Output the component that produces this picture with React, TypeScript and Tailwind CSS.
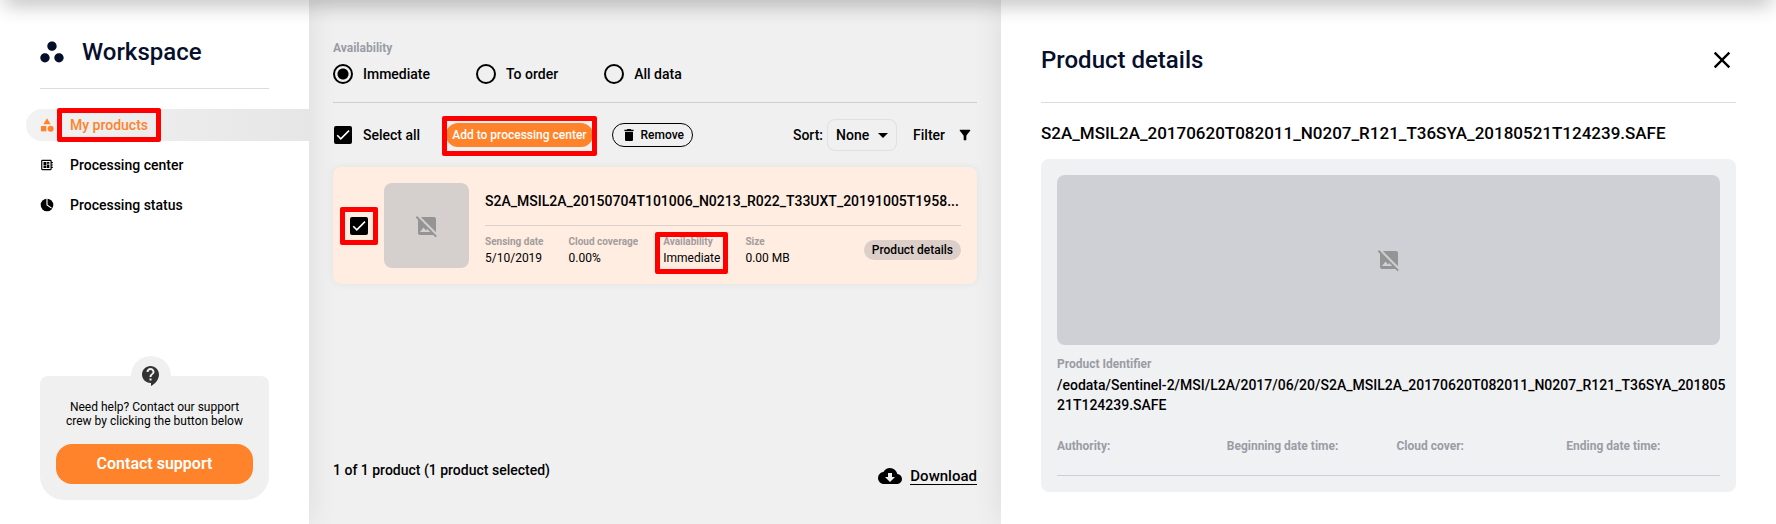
import React from "react";
import {
  MdArrowDropDown,
  MdCategory,
  MdClose,
  MdCloudDownload,
  MdContactSupport,
  MdDelete,
  MdDeveloperBoard,
  MdFilterAlt,
  MdImageNotSupported,
  MdWorkspaces,
} from "react-icons/md";

const ClockIcon = ({ className }: { className?: string }) => (
  <svg viewBox="0 0 16 16" className={className}>
    <circle cx="8" cy="8" r="7.2" fill="currentColor" />
    <path
      d="M8 0.5 V8 L13.2 11.6"
      fill="none"
      stroke="white"
      strokeWidth="1.3"
    />
  </svg>
);

const menu = [
  {
    label: "My products",
    icon: MdCategory,
    iconClass: "size-4",
    active: true,
  },
  {
    label: "Processing center",
    icon: MdDeveloperBoard,
    iconClass: "size-3.5",
    active: false,
  },
  {
    label: "Processing status",
    icon: ClockIcon,
    iconClass: "size-3.5",
    active: false,
  },
];

const availability = ["Immediate", "To order", "All data"];

const productInfo = [
  { label: "Sensing date", value: "5/10/2019" },
  { label: "Cloud coverage", value: "0.00%" },
  { label: "Availability", value: "Immediate", marked: true },
  { label: "Size", value: "0.00 MB" },
];

const detailFields = [
  "Authority:",
  "Beginning date time:",
  "Cloud cover:",
  "Ending date time:",
];

// red frame around a tutorial step, sits over the marked element
const Mark = ({ className }: { className: string }) => (
  <span
    className={`pointer-events-none absolute z-20 rounded-xs border-5 border-[#ff0000] ${className}`}
  />
);

const CheckBox = ({ id, label }: { id: string; label?: string }) => (
  <span className="relative block size-[18px] shrink-0">
    <input
      id={id}
      type="checkbox"
      defaultChecked
      aria-label={label}
      className="peer block size-[18px] appearance-none rounded-xs border-2 border-black checked:bg-black"
    />
    <svg
      viewBox="0 0 18 18"
      className="pointer-events-none absolute inset-0 hidden peer-checked:block"
      fill="none"
      stroke="white"
      strokeWidth="1.6"
    >
      <path d="M3.2 9.2 L6.8 12.8 L15 4.6" />
    </svg>
  </span>
);

const Sidebar = () => (
  <aside className="relative z-10 flex flex-col bg-white pl-10 shadow-[0_0_30px_rgba(0,0,0,0.09)]">
    <div className="mr-10 flex h-[89px] items-center gap-4 border-b border-[#dcdcdc] pt-4 text-[#050f2c]">
      <MdWorkspaces className="-ml-0.5 size-7" />
      <h1 className="text-2xl font-medium">Workspace</h1>
    </div>
    <nav className="mt-5 -ml-3.5 flex flex-col gap-2">
      {menu.map(({ label, icon: Icon, iconClass, active }) => (
        <a
          key={label}
          href="#"
          className={`flex h-8 items-center gap-[15px] rounded-l-full pl-[13px] text-sm font-medium ${
            active
              ? "bg-linear-to-r from-[#f2f2f2] to-[#e6e6e6] text-[#ff832b]"
              : "text-black"
          }`}
        >
          <span className="flex w-4 justify-center">
            <Icon className={iconClass} />
          </span>
          <span className="relative">
            {label}
            {active && <Mark className="-inset-x-[13px] -inset-y-[7px]" />}
          </span>
        </a>
      ))}
    </nav>
    <div className="relative mt-auto mr-10 mb-6 rounded-t-lg rounded-b-3xl bg-[#f0f0f0] px-4 pt-6 pb-4">
      <div className="absolute -top-5 left-1/2 -ml-6 flex size-10 items-center justify-center rounded-full bg-[#f0f0f0]">
        <MdContactSupport className="size-6 text-[#333333]" />
      </div>
      <p className="text-center text-xs leading-[14px]">
        Need help? Contact our support
        <br />
        crew by clicking the button below
      </p>
      <button className="mt-4 h-10 w-full rounded-2xl bg-[#ff832b] text-base font-semibold text-white">
        Contact support
      </button>
    </div>
  </aside>
);

const Thumb = ({ className }: { className: string }) => (
  <div className={`flex items-center justify-center rounded-lg ${className}`}>
    <MdImageNotSupported className="size-6 text-[#949494]" />
  </div>
);

const ProductCard = () => (
  <article className="flex items-center rounded-lg bg-[#ffede1] py-4 pr-4 pl-[17px] shadow-[0_0_8px_rgba(0,0,0,0.06)]">
    <div className="relative mr-4">
      <CheckBox id="product" label="Select product" />
      <Mark className="-inset-2.5" />
    </div>
    <Thumb className="size-[85px] shrink-0 bg-[#d5cfce]" />
    <div className="mt-2 ml-4 min-w-0 flex-1 self-start">
      <h2 className="border-b border-[#dccfc8] pb-3.5 text-sm font-medium break-all">
        S2A_MSIL2A_20150704T101006_N0213_R022_T33UXT_20191005T1958...
      </h2>
      <div className="mt-2 flex items-center">
        <dl className="flex flex-1 gap-[25px]">
          {productInfo.map((item) => (
            <div key={item.label} className="relative">
              <dt className="text-[10px] leading-4 font-bold text-[#a39c9c]">
                {item.label}
              </dt>
              <dd className="text-xs leading-4">{item.value}</dd>
              {item.marked && <Mark className="-inset-x-2 -top-0.5 -bottom-2" />}
            </div>
          ))}
        </dl>
        <button className="h-5 rounded-full bg-[#dccfca] px-2 text-xs font-medium">
          Product details
        </button>
      </div>
    </div>
  </article>
);

const Products = () => (
  <main className="flex min-w-0 flex-col bg-[#f0f0f0] px-6 pt-10">
    <fieldset className="border-b border-[#cfcfcf] pb-[18px]">
      <legend className="text-xs leading-4 font-bold text-[#9a9ca5]">
        Availability
      </legend>
      <div className="mt-2 flex gap-[46px]">
        {availability.map((name, i) => (
          <label
            key={name}
            className="flex items-center gap-2.5 text-sm font-medium"
          >
            <input
              type="radio"
              name="availability"
              defaultChecked={i === 0}
              className="size-5 appearance-none rounded-full border-2 border-black checked:bg-[radial-gradient(circle,black_5px,transparent_6px)]"
            />
            {name}
          </label>
        ))}
      </div>
    </fieldset>
    <div className="flex h-16 items-center text-sm font-medium">
      <div className="ml-px flex items-center gap-[11px]">
        <CheckBox id="select-all" />
        <label htmlFor="select-all">Select all</label>
      </div>
      <div className="relative ml-[26px]">
        <button className="block h-6 rounded-full bg-[#ff832b] px-1.5 text-xs font-medium text-white">
          Add to processing center
        </button>
        <Mark className="-inset-x-1 -top-[7px] -bottom-[9px]" />
      </div>
      <button className="ml-[19px] flex h-6 items-center gap-1 rounded-full border border-black px-2 text-xs font-medium">
        <MdDelete className="size-4" />
        Remove
      </button>
      <label htmlFor="sort" className="ml-auto">
        Sort:
      </label>
      <div className="relative ml-1">
        <select
          id="sort"
          className="h-8 w-[70px] appearance-none rounded-lg border border-[#e0e0e0] pl-2"
        >
          <option>None</option>
        </select>
        <MdArrowDropDown className="pointer-events-none absolute top-1 right-0.5 size-6" />
      </div>
      <button className="ml-4 flex items-center gap-3 pr-1">
        Filter
        <MdFilterAlt className="size-4" />
      </button>
    </div>
    <ProductCard />
    <div className="mt-auto mb-9 flex justify-between text-sm font-medium">
      <p className="leading-6">1 of 1 product (1 product selected)</p>
      <a href="#" className="mt-1.5 flex items-center gap-2 text-[15px]">
        <MdCloudDownload className="size-6" />
        <span className="border-b border-black leading-4">Download</span>
      </a>
    </div>
  </main>
);

const Details = () => (
  <section className="relative z-10 min-w-0 bg-white px-10 pb-8 shadow-[0_0_30px_rgba(0,0,0,0.09)]">
    <div className="flex h-[103px] items-center justify-between border-b border-[#dcdcdc] pt-[18px]">
      <h1 className="text-2xl font-medium text-[#050f2c]">Product details</h1>
      <button aria-label="Close">
        <MdClose className="size-7" />
      </button>
    </div>
    <h2 className="pt-[18px] pb-3.5 text-[17px] leading-6 font-medium">
      S2A_MSIL2A_20170620T082011_N0207_R121_T36SYA_20180521T124239.SAFE
    </h2>
    <div className="rounded-lg bg-[#f0f1f3] p-4">
      <Thumb className="h-[170px] bg-[#cfd0d5]" />
      <p className="mt-[11px] text-xs leading-4 font-bold text-[#9a9ca5]">
        Product Identifier
      </p>
      <p className="mt-[3px] -mr-2 text-sm font-medium break-all">
        /eodata/Sentinel-2/MSI/L2A/2017/06/20/S2A_MSIL2A_20170620T082011_N0207_R121_T36SYA_20180521T124239.SAFE
      </p>
      <div className="mt-[23px] grid grid-cols-4 gap-4 border-b border-[#cfd0d5] pb-[21px] text-xs leading-4 font-bold text-[#9a9ca5]">
        {detailFields.map((field) => (
          <span key={field}>{field}</span>
        ))}
      </div>
    </div>
  </section>
);

const App = () => {
  return (
    <div className="relative grid min-h-screen grid-cols-[309px_692fr_775fr] overflow-hidden font-['Roboto',sans-serif] text-black">
      <Sidebar />
      <Products />
      <Details />
      {/* shadow of the app header above */}
      <div className="pointer-events-none absolute inset-x-2 -top-2 z-30 h-2 shadow-[0_0_20px_4px_rgba(0,0,0,0.3)]" />
    </div>
  );
};

export default App;
